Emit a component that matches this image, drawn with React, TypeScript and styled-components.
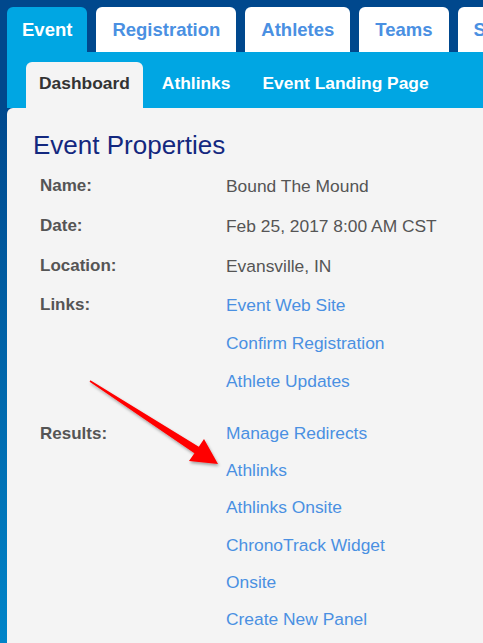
import React from 'react';
import styled, { createGlobalStyle } from 'styled-components';

const GlobalStyle = createGlobalStyle`
  html, body {
    margin: 0;
    padding: 0;
    overflow: hidden;
  }
  body {
    font-family: "Liberation Sans", Arial, sans-serif;
    background: linear-gradient(to bottom, #00488d 0%, #00488d 16%, #0087cb 100%);
    min-height: 643px;
  }
`;

// Page shell
const Page = styled.div`
  position: relative;
  width: 640px;
  min-height: 643px;
  padding: 7px 0 0 7px;
  box-sizing: border-box;
`;

const TopTabs = styled.nav`
  display: flex;
  gap: 9px;
  white-space: nowrap;
`;

const TopTab = styled.a<{ $active?: boolean }>`
  display: block;
  height: 45px;
  line-height: 45px;
  padding: 0 ${({ $active }) => ($active ? '15px 0 15px' : '16px 0 16px')};
  border-radius: 6px 6px 0 0;
  font-size: 18.5px;
  font-weight: bold;
  text-decoration: none;
  background: ${({ $active }) => ($active ? '#00a6e3' : '#ffffff')};
  color: ${({ $active }) => ($active ? '#ffffff' : '#4a90e2')};
`;

const SubNav = styled.nav`
  display: flex;
  gap: 6px;
  height: 56px;
  padding: 10px 0 0 19px;
  box-sizing: border-box;
  background: #00a6e3;
  white-space: nowrap;
`;

const SubTab = styled.a<{ $active?: boolean }>`
  display: block;
  height: 46px;
  line-height: 43px;
  padding: 0 13px;
  border-radius: 6px 6px 0 0;
  font-size: 17.4px;
  font-weight: bold;
  text-decoration: none;
  background: ${({ $active }) => ($active ? '#f4f4f4' : 'transparent')};
  color: ${({ $active }) => ($active ? '#333333' : '#ffffff')};
`;

const Panel = styled.section`
  background: #f4f4f4;
  padding: 22px 0 30px 26px;
  min-height: 560px;
  box-sizing: border-box;
  border-top-left-radius: 6px;
`;

const Heading = styled.h2`
  margin: 0 0 6px;
  font-size: 26px;
  font-weight: normal;
  line-height: 30px;
  color: #13287f;
`;

const Properties = styled.div`
  padding-left: 7px;
  color: #555555;
`;

const Row = styled.div<{ $gap?: number; $line?: number }>`
  display: grid;
  grid-template-columns: 186px 1fr;
  margin-top: ${({ $gap }) => $gap ?? 0}px;
  line-height: ${({ $line }) => $line ?? 40}px;
  font-size: 17.4px;
`;

const Label = styled.div`
  font-size: 17px;
  font-weight: bold;
`;

const LinkList = styled.div`
  display: flex;
  flex-direction: column;
`;

const Link = styled.a`
  color: #4a90e2;
  text-decoration: none;
`;

const ArrowLayer = styled.svg`
  position: absolute;
  left: 0;
  top: 0;
  width: 483px;
  height: 643px;
  pointer-events: none;
  overflow: visible;
`;

const topTabs = ['Event', 'Registration', 'Athletes', 'Teams', 'Settings'];
const subTabs = ['Dashboard', 'Athlinks', 'Event Landing Page'];
const linkItems = ['Event Web Site', 'Confirm Registration', 'Athlete Updates'];
const resultItems = [
  'Manage Redirects',
  'Athlinks',
  'Athlinks Onsite',
  'ChronoTrack Widget',
  'Onsite',
  'Create New Panel',
];

const Arrow: React.FC = () => (
  <ArrowLayer viewBox="0 0 483 643">
    <defs>
      <filter id="arrowShadow" x="-20%" y="-20%" width="140%" height="140%">
        <feDropShadow dx="1" dy="2" stdDeviation="1.6" floodColor="#000" floodOpacity="0.35" />
      </filter>
    </defs>
    <polygon
      points="90.4,380.3 198.8,446.8 204,439 218,464 189,461 194.4,453.2 89.6,381.7"
      fill="#ff0000"
      filter="url(#arrowShadow)"
    />
  </ArrowLayer>
);

const App: React.FC = () => (
  <>
    <GlobalStyle />
    <Page>
      <TopTabs>
        {topTabs.map((t, i) => (
          <TopTab key={t} $active={i === 0}>
            {t}
          </TopTab>
        ))}
      </TopTabs>
      <SubNav>
        {subTabs.map((t, i) => (
          <SubTab key={t} $active={i === 0}>
            {t}
          </SubTab>
        ))}
      </SubNav>
      <Panel>
        <Heading>Event Properties</Heading>
        <Properties>
          <Row>
            <Label>Name:</Label>
            <div>Bound The Mound</div>
          </Row>
          <Row>
            <Label>Date:</Label>
            <div>Feb 25, 2017 8:00 AM CST</div>
          </Row>
          <Row>
            <Label>Location:</Label>
            <div>Evansville, IN</div>
          </Row>
          <Row $line={38}>
            <Label>Links:</Label>
            <LinkList>
              {linkItems.map((l) => (
                <Link key={l}>{l}</Link>
              ))}
            </LinkList>
          </Row>
          <Row $gap={15} $line={37.2}>
            <Label>Results:</Label>
            <LinkList>
              {resultItems.map((l) => (
                <Link key={l}>{l}</Link>
              ))}
            </LinkList>
          </Row>
        </Properties>
      </Panel>
      <Arrow />
    </Page>
  </>
);

export default App;
